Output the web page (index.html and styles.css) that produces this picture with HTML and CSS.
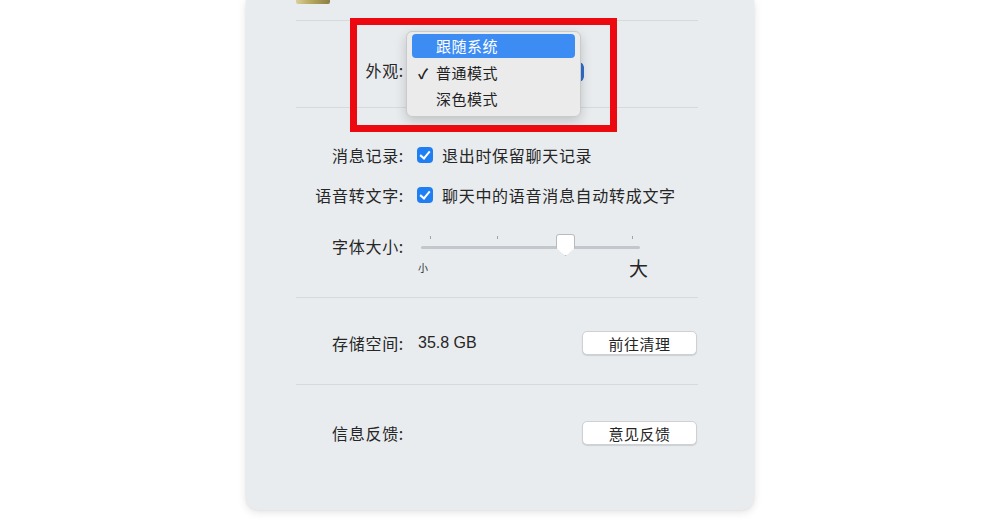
FILE: index.html
```html
<!DOCTYPE html>
<html lang="zh-CN">
  <head>
    <meta charset="UTF-8" />
    <title>通用设置</title>
    <link rel="stylesheet" href="styles.css">
  </head>
  <body>
    <div class="window">
      <div class="content">
        <div class="top-row">
          <div class="top-icon"></div>
        </div>
        <div class="divider"></div>

        <div class="row appearance-row">
          <div class="label">外观:</div>
          <div class="popup-btn">
            <span class="popup-arrow"></span>
          </div>
        </div>
        <div class="divider"></div>

        <div class="section">
          <div class="row check-row">
            <div class="label">消息记录:</div>
            <label class="check">
              <span class="checkbox"></span>
              <span>退出时保留聊天记录</span>
            </label>
          </div>
          <div class="row check-row">
            <div class="label">语音转文字:</div>
            <label class="check">
              <span class="checkbox"></span>
              <span>聊天中的语音消息自动转成文字</span>
            </label>
          </div>
          <div class="row slider-row">
            <div class="label">字体大小:</div>
            <div class="slider-wrap">
              <div class="slider">
                <span class="tick" style="left: 9px"></span>
                <span class="tick" style="left: 76px"></span>
                <span class="tick" style="left: 144px"></span>
                <span class="tick" style="left: 211px"></span>
                <div class="track"></div>
                <div class="thumb" style="left: 135px"></div>
              </div>
              <div class="slider-labels">
                <span class="small">小</span>
                <span class="big">大</span>
              </div>
            </div>
          </div>
        </div>
        <div class="divider"></div>

        <div class="row action-row">
          <div class="label">存储空间:</div>
          <div class="value">35.8 GB</div>
          <button class="mac-btn">前往清理</button>
        </div>
        <div class="divider"></div>

        <div class="row action-row">
          <div class="label">信息反馈:</div>
          <div class="value"></div>
          <button class="mac-btn">意见反馈</button>
        </div>
      </div>

      <!-- popup menu shown open over the appearance row -->
      <div class="menu">
        <div class="menu-item active">跟随系统</div>
        <div class="menu-item"><span class="tickmark">✓</span>普通模式</div>
        <div class="menu-item">深色模式</div>
      </div>

      <div class="highlight-box"></div>
    </div>
  </body>
</html>
```

FILE: styles.css
```css
* {
  margin: 0;
  padding: 0;
  box-sizing: border-box;
}

body {
  font-family: "Noto Sans CJK SC", "Noto Sans", sans-serif;
  background: #ffffff;
  color: #262626;
  width: 991px;
  height: 521px;
  overflow: hidden;
}

.window {
  position: relative;
  margin-left: 246px;
  width: 508px;
  height: 510px;
  background: #e9ecef;
  border-radius: 0 0 12px 12px;
  box-shadow: 0 2px 8px rgba(0, 0, 0, 0.12), 0 0 2px rgba(0, 0, 0, 0.08);
}

.content {
  padding: 0 56px 0 50px;
}

.top-row {
  height: 20px;
}

.top-icon {
  width: 34px;
  height: 4px;
  background: linear-gradient(90deg, #d9cf9a 0%, #b9ab62 40%, #8a7f45 100%);
  border-radius: 0 0 2px 2px;
}

.divider {
  height: 1px;
  background: #d7dadd;
}

.row {
  display: flex;
  align-items: center;
  font-size: 16px;
  letter-spacing: 0.7px;
}

.label {
  width: 108px;
  text-align: right;
  flex-shrink: 0;
  margin-right: 13px;
}

.appearance-row {
  height: 86px;
  padding-top: 12px;
}

.popup-btn {
  width: 167px;
  height: 20px;
  margin-top: 4px;
  background: #ffffff;
  border-radius: 5px;
  display: flex;
  justify-content: flex-end;
  overflow: hidden;
}

.popup-arrow {
  width: 18px;
  height: 20px;
  background: #2f6fd0;
  border-radius: 0 5px 5px 0;
}

.section {
  height: 189px;
  padding-top: 27px;
}

.check-row {
  height: 40px;
}

.check {
  display: flex;
  align-items: center;
  gap: 9px;
}

.checkbox {
  width: 16px;
  height: 16px;
  border-radius: 4px;
  background: #1f7ff2;
  position: relative;
}

.checkbox::after {
  content: "";
  position: absolute;
  left: 5px;
  top: 2px;
  width: 4px;
  height: 8px;
  border: solid #ffffff;
  border-width: 0 2px 2px 0;
  transform: rotate(40deg);
}

.slider-row {
  align-items: flex-start;
  padding-top: 21px;
}

.slider-row .label {
  line-height: 20px;
}

.slider-wrap {
  width: 230px;
  padding-left: 4px;
}

.slider {
  position: relative;
  width: 219px;
  height: 26px;
}

.tick {
  position: absolute;
  top: 0;
  width: 1px;
  height: 3px;
  background: #9fa3a8;
}

.track {
  position: absolute;
  top: 10px;
  left: 0;
  right: 0;
  height: 3px;
  border-radius: 2px;
  background: #c3c6ca;
}

.thumb {
  position: absolute;
  top: -2px;
  width: 19px;
  height: 22px;
  background: #ffffff;
  border: 1px solid #b7babe;
  border-radius: 3px 3px 2px 2px;
  clip-path: polygon(0 0, 100% 0, 100% 62%, 50% 100%, 0 62%);
  box-shadow: 0 1px 2px rgba(0, 0, 0, 0.15);
}

.slider-labels {
  display: flex;
  justify-content: space-between;
  align-items: center;
  width: 231px;
  margin-left: -4px;
  margin-top: -8px;
}

.small {
  font-size: 10px;
  padding-left: 1px;
}

.big {
  font-size: 19px;
  letter-spacing: 0;
}

.action-row {
  height: 86px;
  padding-top: 4px;
}

.value {
  flex: 1;
  margin-left: 1px;
  font-family: "Liberation Sans", Arial, sans-serif;
  font-size: 16px;
  letter-spacing: 0;
}

.mac-btn {
  width: 115px;
  height: 24px;
  margin-right: 1px;
  background: #ffffff;
  border: 1px solid #cdd0d4;
  border-radius: 5px;
  box-shadow: 0 1px 1px rgba(0, 0, 0, 0.12);
  font-family: "Noto Sans CJK SC", sans-serif;
  font-size: 15px;
  color: #262626;
  letter-spacing: 0.5px;
}

.content > .action-row:last-child {
  height: 96px;
  padding-top: 0;
}

.menu {
  position: absolute;
  left: 160px;
  top: 31px;
  width: 175px;
  height: 86px;
  padding: 2px 5px;
  background: #ebebec;
  border: 1px solid #c9cacc;
  border-radius: 6px;
  box-shadow: 0 4px 12px rgba(0, 0, 0, 0.18);
}

.menu-item {
  height: 26px;
  line-height: 26px;
  padding-left: 24px;
  font-size: 15px;
  letter-spacing: 0.5px;
  color: #222222;
  border-radius: 4px;
  position: relative;
}

.menu-item.active {
  background: #3c8cf4;
  color: #ffffff;
  height: 24px;
  line-height: 24px;
  margin-bottom: 2px;
}

.tickmark {
  position: absolute;
  left: 6px;
  font-size: 14px;
  font-weight: 700;
}

.highlight-box {
  position: absolute;
  left: 104px;
  top: 18px;
  width: 267px;
  height: 114px;
  border: 7px solid #ec0a10;
}
```
